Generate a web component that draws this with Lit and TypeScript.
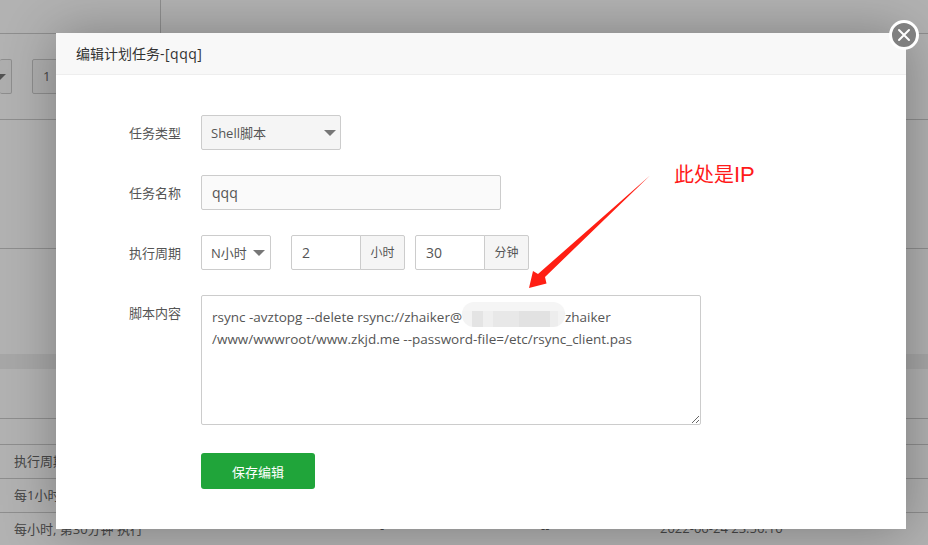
import { LitElement, html, css } from "lit";
import { customElement } from "lit/decorators.js";

@customElement("app-root")
export class AppRoot extends LitElement {
  static styles = css`
    :host {
      display: block;
      position: relative;
      width: 928px;
      height: 545px;
      overflow: hidden;
      font-family: "Open Sans", "Noto Sans CJK SC", sans-serif;
      font-size: 13px;
      color: #555;
      background: #fff;
    }
    /* background page */
    .page { display: flex; flex-direction: column; height: 545px; color: #666; }
    .top { height: 33px; flex: none; border-bottom: 1px solid #ccc; box-sizing: content-box; }
    .top .vline { margin-left: 160px; width: 1px; height: 33px; background: #ccc; }
    .tools { height: 86px; flex: none; display: flex; align-items: flex-start; padding-top: 25px; gap: 20px; border-bottom: 1px solid #ccc; box-sizing: border-box; }
    .tools .ctl { height: 35px; box-sizing: border-box; border: 1px solid #ccc; border-radius: 2px; }
    .tools .sel { width: 12px; border-left: 0; display: flex; align-items: center; overflow: hidden; background: #fafafa; }
    .tools .sel .tri { margin-left: -6px; flex: none; }
    .tools .num { width: 40px; padding: 7px 0 0 10px; background: #fafafa; }
    .gap1 { height: 129px; flex: none; box-sizing: border-box; border-bottom: 1px solid #ccc; }
    .gap2 { height: 105px; flex: none; }
    .band { height: 15px; flex: none; background: #f0f0f0; }
    .row { flex: none; box-sizing: border-box; border-bottom: 1px solid #ccc; padding-left: 14px; padding-bottom: 3px; display: flex; align-items: center; }
    .r50 { height: 50px; }
    .r26 { height: 26px; }
    .r34 { height: 34px; }
    .last { border-bottom: 0; padding-bottom: 4px; }
    .c1 { width: 366px; flex: none; }
    .c2 { width: 161px; flex: none; }
    .c3 { width: 119px; flex: none; }
    .overlay { position: absolute; inset: 0; background: rgba(0, 0, 0, 0.3); }

    /* modal */
    .modal {
      position: absolute;
      left: 56px;
      top: 33px;
      width: 850px;
      height: 496px;
      background: #fff;
      box-shadow: 1px 1px 50px rgba(0, 0, 0, 0.3);
    }
    .head {
      height: 42px;
      box-sizing: border-box;
      background: #f8f8f8;
      border-bottom: 1px solid #eee;
      padding-left: 20px;
      font-size: 14px;
      line-height: 42px;
      color: #333;
    }
    .head span { letter-spacing: 0.5px; }
    .form { padding-top: 40px; display: flex; flex-direction: column; gap: 25px; }
    .line { display: flex; align-items: flex-start; }
    .label { width: 125px; height: 35px; margin-right: 20px; text-align: right; line-height: 37px; color: #555; }
    .ctrl {
      height: 35px;
      box-sizing: border-box;
      border: 1px solid #ccc;
      border-radius: 2px;
      padding-left: 10px;
      line-height: 33px;
      background: #fff;
      color: #555;
    }
    .select { display: flex; align-items: center; justify-content: space-between; padding-left: 9px; padding-right: 4px; }
    .select .txt { padding-top: 1px; }
    .wide { width: 140px; background: #f5f5f5; }
    .narrow { width: 70px; padding-right: 5px; }
    .name { width: 300px; background: #fafafa; font-size: 14px; }
    .tri { width: 0; height: 0; border-style: solid; border-width: 6px 6px 0 6px; border-color: #777 transparent transparent transparent; }
    .group { display: flex; margin-left: 10px; }
    .first { margin-left: 20px; }
    .group .val { width: 70px; border-radius: 2px 0 0 2px; font-size: 14px; }
    .group .unit {
      width: 45px;
      margin-left: -1px;
      padding: 0;
      text-align: center;
      background: #f5f5f5;
      border-radius: 0 2px 2px 0;
      font-size: 12px;
    }
    .script {
      width: 500px;
      height: 130px;
      box-sizing: border-box;
      border: 1px solid #ccc;
      border-radius: 2px;
      padding: 10px 10px;
      line-height: 22px;
      font-size: 13.5px;
      color: #555;
      overflow: auto;
      resize: both;
      white-space: nowrap;
    }
    .ip {
      display: inline-block;
      position: relative;
      width: 103px;
      height: 25px;
      margin: -4px -5px -4px 0;
      vertical-align: top;
      border-radius: 12px;
      background:
        linear-gradient(#f5f5f5, #f5f5f5) top / 100% 9px no-repeat,
        linear-gradient(90deg, #f3f3f3 0 10%, #e4e4e4 10% 20%, #efefef 20% 30%, #e8e8e8 30% 55%, #e2e2e2 55% 85%, #ededed 85% 93%, #f3f3f3 93%);
    }
    .actions { margin: 3px 0 0 145px; }
    .save {
      width: 114px;
      height: 36px;
      border: 0;
      border-radius: 3px;
      background: #20a53a;
      color: #fff;
      font: inherit;
      display: block;
    }

    /* annotations and close button */
    .note {
      position: absolute;
      left: 674px;
      top: 160px;
      font-size: 20px;
      line-height: 30px;
      color: #ff1a1a;
    }
    .note span { font-family: "Liberation Sans", sans-serif; font-size: 22px; }
    .arrow { position: absolute; left: 0; top: 0; pointer-events: none; }
    .close {
      position: absolute;
      left: 889px;
      top: 20px;
      width: 30px;
      height: 30px;
      box-sizing: border-box;
      border-radius: 50%;
      background: #808080;
      border: 3px solid #fff;
      display: flex;
      align-items: center;
      justify-content: center;
    }
  `;

  render() {
    return html`
      <div class="page">
        <div class="top"><div class="vline"></div></div>
        <div class="tools">
          <div class="ctl sel"><span class="tri"></span></div>
          <div class="ctl num">1</div>
        </div>
        <div class="gap1"></div>
        <div class="gap2"></div>
        <div class="band"></div>
        <div class="row r50"></div>
        <div class="row r26"></div>
        <div class="row r34">执行周期</div>
        <div class="row r34">每1小时</div>
        <div class="row r34 last">
          <span class="c1">每小时, 第30分钟 执行</span>
          <span class="c2">-</span>
          <span class="c3">--</span>
          <span>2022-06-24 23:56:10</span>
        </div>
      </div>
      <div class="overlay"></div>
      <div class="modal">
        <div class="head">编辑计划任务<span>-[qqq]</span></div>
        <div class="form">
          <div class="line">
            <div class="label">任务类型</div>
            <div class="ctrl select wide"><span class="txt">Shell脚本</span><span class="tri"></span></div>
          </div>
          <div class="line">
            <div class="label">任务名称</div>
            <div class="ctrl name">qqq</div>
          </div>
          <div class="line">
            <div class="label">执行周期</div>
            <div class="ctrl select narrow"><span class="txt">N小时</span><span class="tri"></span></div>
            <div class="group first">
              <div class="ctrl val">2</div>
              <div class="ctrl unit">小时</div>
            </div>
            <div class="group">
              <div class="ctrl val">30</div>
              <div class="ctrl unit">分钟</div>
            </div>
          </div>
          <div class="line">
            <div class="label">脚本内容</div>
            <div class="script">
              rsync -avztopg --delete rsync://zhaiker@<span class="ip"></span>/zhaiker<br />
              /www/wwwroot/www.zkjd.me --password-file=/etc/rsync_client.pas
            </div>
          </div>
          <div class="actions"><button class="save">保存编辑</button></div>
        </div>
      </div>
      <svg class="arrow" width="928" height="545" viewBox="0 0 928 545">
        <polygon fill="#ff1f14" points="650,175.5 545,277 546.5,283.5 529,288 533,271 538,274"></polygon>
      </svg>
      <div class="note">此处是<span>IP</span></div>
      <div class="close">
        <svg width="16" height="16" viewBox="0 0 16 16">
          <path d="M3 3L13 13M13 3L3 13" stroke="#fff" stroke-width="2" stroke-linecap="round"></path>
        </svg>
      </div>
    `;
  }
}
